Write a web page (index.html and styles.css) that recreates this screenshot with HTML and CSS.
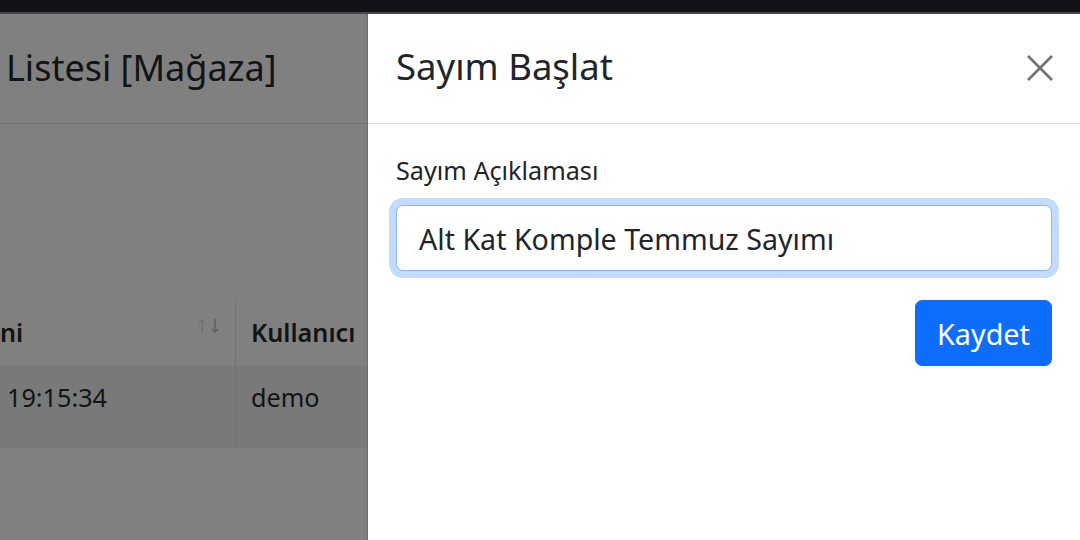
FILE: index.html
```html
<!DOCTYPE html>
<html lang="tr">
<head>
<meta charset="utf-8">
<title>Sayım Başlat</title>
<link rel="stylesheet" href="styles.css">
</head>
<body>
<div class="topbar"></div>
<div class="topline"></div>
<div class="main">
  <div class="page">
    <div class="page-head"><h3 class="page-title">Listesi [Mağaza]</h3></div>
    <div class="spacer"></div>
    <div class="table">
      <div class="row row-head">
        <div class="cell c1 th">
          <span>ni</span>
          <svg class="sort" width="22" height="16" viewBox="0 0 22 16">
            <path d="M4 15V2M1 5l3-3 3 3" fill="none" stroke="#6e6e6e" stroke-width="1.4"/>
            <path d="M17 1v13M14 11l3 3 3-3" fill="none" stroke="#5e5e5e" stroke-width="1.4"/>
          </svg>
        </div>
        <div class="cell c2 th">Kullanıcı</div>
      </div>
      <div class="row row-body">
        <div class="cell c1 td">19:15:34</div>
        <div class="cell c2 td td2">demo</div>
      </div>
    </div>
  </div>
  <aside class="panel">
    <div class="panel-head">
      <h5 class="panel-title">Sayım Başlat</h5>
      <button class="close" aria-label="Kapat">
        <svg width="26" height="26" viewBox="0 0 26 26"><path d="M1 1L25 25M25 1L1 25" stroke="#707070" stroke-width="2.6" fill="none"/></svg>
      </button>
    </div>
    <div class="panel-body">
      <label class="label" for="desc">Sayım Açıklaması</label>
      <input id="desc" class="input" type="text" value="Alt Kat Komple Temmuz Sayımı" readonly>
      <div class="actions"><button class="btn">Kaydet</button></div>
    </div>
  </aside>
</div>
</body>
</html>
```
FILE: styles.css
```css
* { box-sizing: border-box; }
html, body { margin: 0; padding: 0; }
body {
  width: 1080px;
  height: 540px;
  overflow: hidden;
  font-family: "Noto Sans", "Open Sans", sans-serif;
  background: #808080;
}
.topbar { height: 12px; background: #111417; }
.topline { height: 2px; background: #45494d; }
.main { display: flex; height: 526px; }

.page {
  width: 367px;
  flex: none;
  background: #808080;
  color: #111315;
  overflow: hidden;
}
.page-head {
  height: 110px;
  border-bottom: 1px solid #6f7173;
  display: flex;
  align-items: center;
  padding: 0 0 2px 6px;
}
.page-title {
  margin: 0;
  font-size: 36px;
  font-weight: 400;
  line-height: 1.2;
  white-space: nowrap;
}
.spacer { height: 176px; }
.table { width: 100%; }
.row { display: flex; }
.row-head { height: 66px; }
.row-body { height: 82px; background: #797979; }
.cell { font-size: 25.2px; line-height: 37.8px; white-space: nowrap; }
.c1 { width: 236px; flex: none; border-right: 1px solid #747474; }
.c2 { flex: 1; padding-left: 15px; }
.th { font-weight: 600; display: flex; align-items: center; }
.c1.th { justify-content: space-between; padding-right: 15px; }
.sort { align-self: flex-start; margin-top: 18px; }
.td { padding-top: 13px; }
.c1.td { padding-left: 7px; }

.panel {
  flex: 1;
  background: #fff;
  border-left: 1px solid #6d6d6d;
  color: #212529;
}
.panel-head {
  height: 110px;
  border-bottom: 1px solid #dee2e6;
  display: flex;
  align-items: center;
  justify-content: space-between;
  padding: 0 27px 4px 28px;
}
.panel-title {
  margin: 0;
  font-size: 36.5px;
  font-weight: 400;
  line-height: 1.2;
}
.close {
  border: 0;
  background: none;
  padding: 0;
  width: 26px;
  height: 26px;
  display: flex;
  margin-top: 2px;
}
.panel-body { padding: 27px 28px 0 28px; }
.label {
  display: block;
  font-size: 25.2px;
  line-height: 38px;
  margin-bottom: 16px;
  color: #212529;
}
.input {
  display: block;
  width: 100%;
  height: 66px;
  padding: 0 21px 0 22px;
  font-family: "Noto Sans", "Open Sans", sans-serif;
  font-size: 28.6px;
  color: #212529;
  background: #fff;
  border: 1px solid #86b7fe;
  border-radius: 7px;
  box-shadow: 0 0 0 7px #c2dbfe;
  outline: none;
}
.actions { display: flex; justify-content: flex-end; margin-top: 29px; }
.btn {
  height: 66px;
  padding: 0 21px;
  font-family: "Noto Sans", "Open Sans", sans-serif;
  font-size: 28.8px;
  color: #fff;
  background: #0d6efd;
  border: 1px solid #0d6efd;
  border-radius: 7px;
}
```
